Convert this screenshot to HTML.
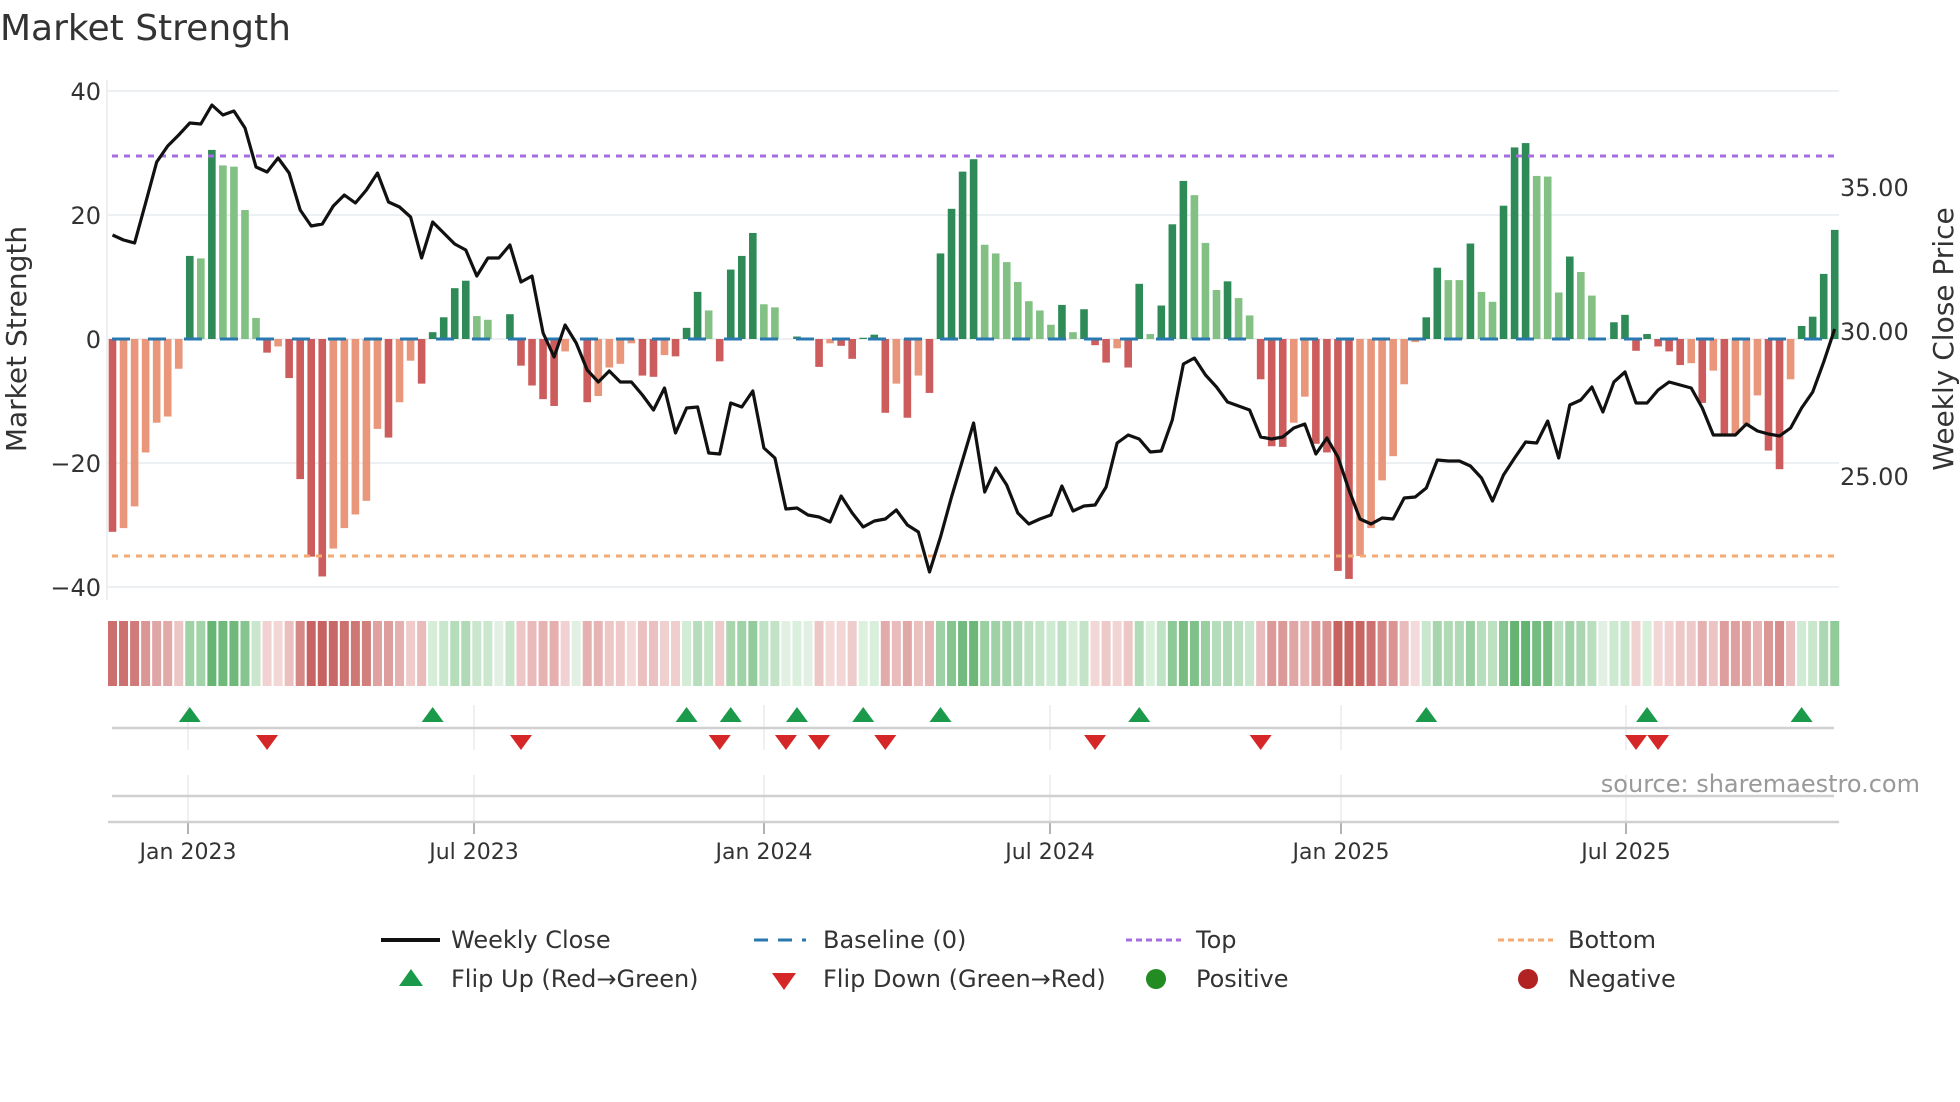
<!DOCTYPE html>
<html><head><meta charset="utf-8"><style>
html,body{margin:0;padding:0;background:#fff;width:1960px;height:1102px;overflow:hidden}
svg{display:block;font-family:"DejaVu Sans","Liberation Sans",sans-serif}
</style></head><body>
<svg id="s" width="1960" height="1102" viewBox="0 0 1960 1102" xmlns="http://www.w3.org/2000/svg">
<text x="0" y="40" font-size="36" fill="#333">Market Strength</text>
<g id="grid"></g>
<g id="bars"></g>
<g id="strip"></g>
<g id="marks"></g>
<g fill="#333" font-size="24" text-anchor="end">
<text x="101" y="100">40</text><text x="101" y="224">20</text><text x="101" y="348">0</text><text x="101" y="472">−20</text><text x="101" y="596">−40</text>
</g>
<g fill="#333" font-size="24">
<text x="1840" y="196">35.00</text><text x="1840" y="340">30.00</text><text x="1840" y="485">25.00</text>
</g>
<text transform="translate(26,339) rotate(-90)" font-size="28" fill="#333" text-anchor="middle">Market Strength</text>
<text transform="translate(1953,339) rotate(-90)" font-size="28" fill="#333" text-anchor="middle">Weekly Close Price</text>
<g fill="#333" font-size="22" text-anchor="middle">
<text x="188" y="859">Jan 2023</text><text x="474" y="859">Jul 2023</text><text x="764" y="859">Jan 2024</text><text x="1050" y="859">Jul 2024</text><text x="1341" y="859">Jan 2025</text><text x="1626" y="859">Jul 2025</text>
</g>
<text x="1920" y="792" font-size="24" fill="#999" text-anchor="end">source: sharemaestro.com</text>
<g font-size="24" fill="#333">
<line x1="381" y1="940" x2="440" y2="940" stroke="#111" stroke-width="4"/>
<text x="451" y="948">Weekly Close</text>
<line x1="754" y1="940" x2="806" y2="940" stroke="#2a78b0" stroke-width="3" stroke-dasharray="14,10"/>
<text x="823" y="948">Baseline (0)</text>
<line x1="1126" y1="940" x2="1181" y2="940" stroke="#a56de0" stroke-width="3" stroke-dasharray="6,4"/>
<text x="1196" y="948">Top</text>
<line x1="1498" y1="940" x2="1553" y2="940" stroke="#f4aa70" stroke-width="3" stroke-dasharray="6,4"/>
<text x="1568" y="948">Bottom</text>
<polygon points="411,969 423,986 399,986" fill="#1a9a4a"/>
<text x="451" y="987">Flip Up (Red→Green)</text>
<polygon points="772,973 796,973 784,990" fill="#d62728"/>
<text x="823" y="987">Flip Down (Green→Red)</text>
<ellipse cx="1156" cy="979" rx="10" ry="10" fill="#228b22"/>
<text x="1196" y="987">Positive</text>
<ellipse cx="1528" cy="979" rx="10" ry="10" fill="#b22222"/>
<text x="1568" y="987">Negative</text>
</g>
</svg>
<script>
const V=[-31.1,-30.5,-27,-18.3,-13.5,-12.5,-4.8,13.4,13,30.5,28,27.8,20.8,3.4,-2.2,-1.2,-6.3,-22.6,-35.1,-38.3,-33.8,-30.5,-28.3,-26.1,-14.5,-15.9,-10.2,-3.5,-7.2,1.1,3.5,8.2,9.4,3.7,3.1,0,4,-4.3,-7.5,-9.7,-10.8,-2,0,-10.2,-9.2,-4.6,-4,-0.7,-5.9,-6.1,-2.6,-2.8,1.8,7.6,4.6,-3.6,11.2,13.4,17.1,5.6,5.1,0,0.4,0,-4.5,-0.7,-1.1,-3.2,0.2,0.7,-11.9,-7.2,-12.7,-5.9,-8.7,13.8,21,27,29,15.2,13.8,12.4,9.2,6.1,4.6,2.3,5.5,1.1,4.8,-1,-3.8,-1.5,-4.6,8.9,0.8,5.4,18.5,25.5,23.2,15.5,7.9,9.3,6.6,3.8,-6.5,-17.3,-17.4,-13.5,-9.3,-16.9,-18.3,-37.4,-38.7,-35,-30.5,-22.8,-18.9,-7.3,-0.5,3.5,11.5,9.5,9.5,15.4,7.6,6,21.5,30.9,31.6,26.3,26.2,7.5,13.3,10.8,7,0,2.7,3.9,-1.9,0.8,-1.2,-2,-4.2,-3.9,-10.3,-5.1,-15.6,-15.4,-13.8,-9.1,-18,-21,-6.5,2.1,3.6,10.5,17.6];
const L=[235,240,243,203,162,146,135,123,124,105,115,111,128,167,172,158,173,210,226,224,206,195,203,190,173,202,207,217,258,222,233,244,250,276,258,258,245,282,276,333,357,325,343,370,382,371,382,382,395,410,388,433,408,407,453,454,403,407,391,448,458,509,508,515,517,522,496,513,527,521,519,510,525,532,572,537,497,460,423,492,468,485,513,524,519,515,486,511,506,505,487,443,435,439,452,451,420,364,358,375,387,402,406,410,437,439,437,428,424,454,438,457,490,519,524,518,519,498,497,488,460,461,461,466,478,501,475,458,442,443,421,458,405,400,387,412,382,372,403,403,390,382,385,388,408,435,435,435,424,431,434,436,428,408,392,362,329];
const ns="http://www.w3.org/2000/svg";
function el(p,t,a){const e=document.createElementNS(ns,t);for(const k in a)e.setAttribute(k,a[k]);document.getElementById(p).appendChild(e);return e;}
const X=i=>112.5+i*11.04, Y0=339, K=6.2;
[91,215,339,463,587].forEach(y=>el("grid","line",{x1:108,x2:1839,y1:y,y2:y,stroke:"#edf0f3","stroke-width":2}));
el("grid","line",{x1:107,x2:107,y1:80,y2:600,stroke:"#edf0f3","stroke-width":2});
[188,474,764,1050,1341,1626].forEach(x=>{el("grid","line",{x1:x,x2:x,y1:705,y2:750,stroke:"#e8ecf0","stroke-width":1.5});el("grid","line",{x1:x,x2:x,y1:775,y2:822,stroke:"#e8ecf0","stroke-width":1.5});el("grid","line",{x1:x,x2:x,y1:822,y2:834,stroke:"#999","stroke-width":1.5});});
el("grid","line",{x1:112,x2:1834,y1:728,y2:728,stroke:"#d0d0d0","stroke-width":2.5});
el("grid","line",{x1:112,x2:1834,y1:796,y2:796,stroke:"#d0d0d0","stroke-width":2.5});
el("grid","line",{x1:108,x2:1839,y1:822,y2:822,stroke:"#d0d0d0","stroke-width":2.5});
for(let i=0;i<V.length;i++){
  const v=V[i]; if(Math.abs(v)<0.05) continue;
  const p=i>0?V[i-1]:0;
  let dark = (Math.sign(v)!==Math.sign(p)) || Math.abs(v)>Math.abs(p);
  const c = v>0 ? (dark?"#2e8b57":"#82c084") : (dark?"#cd5c5c":"#e9967a");
  const h=Math.abs(v)*K;
  el("bars","rect",{x:X(i)-3.8,width:7.6,y:v>0?Y0-h:Y0,height:h,fill:c});
}
el("bars","line",{x1:112,x2:1839,y1:156,y2:156,stroke:"#a56de0","stroke-width":3,"stroke-dasharray":"6,6"});
el("bars","line",{x1:112,x2:1839,y1:556,y2:556,stroke:"#f4aa70","stroke-width":3,"stroke-dasharray":"6,6"});
el("bars","line",{x1:112,x2:1834,y1:339,y2:339,stroke:"#2a78b0","stroke-width":3,"stroke-dasharray":"18,18"});
el("bars","polyline",{points:L.map((y,i)=>X(i).toFixed(1)+","+y).join(" "),fill:"none",stroke:"#111","stroke-width":3.2,"stroke-linejoin":"round"});
function mix(a,b,t){return "rgb("+a.map((x,k)=>Math.round(x+(b[k]-x)*t)).join(",")+")";}
for(let i=0;i<V.length;i++){
  const v=V[i]; const t=Math.min(1,Math.abs(v)/36);
  const c = v>=0.05? mix([222,242,224],[86,172,100],Math.pow(t,0.8)) : (v<=-0.05? mix([246,222,222],[198,98,96],Math.pow(t,0.8)) : "rgb(225,240,226)");
  el("strip","rect",{x:X(i)-4.5,width:9,y:621,height:65,fill:c});
}
const up=[7,29,52,56,62,68,75,93,119,139,153], dn=[14,37,55,61,64,70,89,104,138,140];
up.forEach(i=>el("marks","polygon",{points:`${X(i)},707 ${X(i)+11},722 ${X(i)-11},722`,fill:"#1a9a4a"}));
dn.forEach(i=>el("marks","polygon",{points:`${X(i)-11},735 ${X(i)+11},735 ${X(i)},750`,fill:"#d62728"}));
</script>
</body></html>
